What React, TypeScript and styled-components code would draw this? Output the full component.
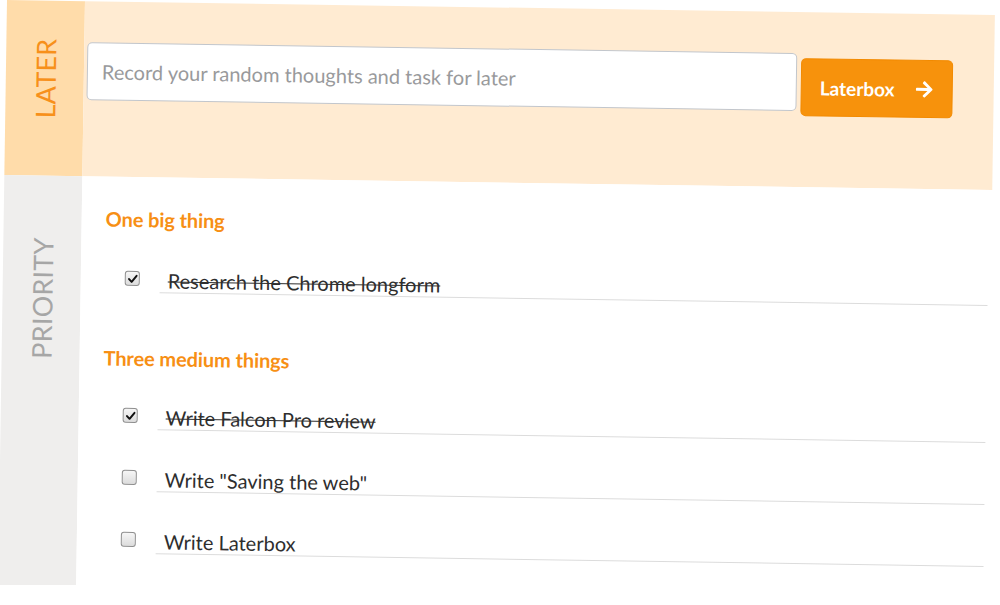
import React, { useState } from "react";
import styled, { createGlobalStyle } from "styled-components";
import { FaArrowRight } from "react-icons/fa";

interface TypesTask {
  id: number
  text: string
  done: boolean
}

interface TypesGroup {
  title: string
  tasks: TypesTask[]
}

const GlobalStyle = createGlobalStyle`
  html, body {
    margin: 0;
    padding: 0;
    background: #ffffff;
    overflow: hidden;
  }
  body {
    font-family: Lato, "Open Sans", "Liberation Sans", sans-serif;
  }
`

const Page = styled.div`
  width: 988px;
  margin-left: 7px;
  transform: rotate(0.87deg);
  transform-origin: 0 0;
`

const Section = styled.section`
  display: flex;
  align-items: stretch;
`

const SideLabel = styled.div<{ $bg: string, $top: number }>`
  width: 78px;
  flex-shrink: 0;
  background: ${p => p.$bg};
  display: flex;
  justify-content: center;
  padding-top: ${p => p.$top}px;
  box-sizing: border-box;
`

const SideText = styled.span<{ $color: string }>`
  writing-mode: vertical-rl;
  transform: rotate(180deg);
  font-family: Lato, "Liberation Sans", sans-serif;
  font-weight: 400;
  font-size: 27px;
  line-height: 1;
  letter-spacing: 0.2px;
  color: ${p => p.$color};
  height: fit-content;
`

const LaterBar = styled.div`
  flex: 1;
  height: 175px;
  background: #ffebd2;
  display: flex;
  align-items: flex-start;
  padding: 41px 0 0 3px;
  box-sizing: border-box;
  gap: 4px;
`

const RecordInput = styled.input`
  width: 710px;
  height: 58px;
  box-sizing: border-box;
  border: 1px solid #c2c6cc;
  border-radius: 5px;
  background: #ffffff;
  padding: 0 14px;
  font-family: Lato, "Liberation Sans", sans-serif;
  font-size: 20px;
  color: #333;
  outline: none;

  &::placeholder {
    color: #999a9c;
  }
`

const LaterButton = styled.button`
  margin-top: 5px;
  width: 152px;
  height: 58px;
  box-sizing: border-box;
  border: 1px solid #f28a00;
  border-radius: 5px;
  background: #f7920c;
  color: #ffffff;
  display: flex;
  align-items: center;
  padding: 0 0 0 18px;
  gap: 20px;
  font-family: Lato, "Liberation Sans", sans-serif;
  font-weight: 700;
  font-size: 19px;
  cursor: pointer;

  svg {
    font-size: 19px;
  }
`

const PriorityBody = styled.div`
  flex: 1;
  background: #ffffff;
  padding: 30px 0 33px 0;
  display: flex;
  flex-direction: column;
`

const Group = styled.div<{ $gap: number }>`
  display: flex;
  flex-direction: column;
  margin-top: ${p => p.$gap}px;
`

const Heading = styled.h3`
  margin: 0 0 0 24px;
  font-family: Lato, "Liberation Sans", sans-serif;
  font-weight: 700;
  font-size: 20px;
  line-height: 24px;
  color: #f78f14;
  letter-spacing: -0.1px;
`

const TaskList = styled.ul<{ $top: number }>`
  list-style: none;
  margin: ${p => p.$top}px 0 0 0;
  padding: 0;
  display: flex;
  flex-direction: column;
  gap: 37px;
`

const TaskRow = styled.li`
  display: flex;
  align-items: center;
  padding-left: 44px;
  margin-right: 3px;
`

const CheckBox = styled.button`
  width: 15px;
  height: 15px;
  flex-shrink: 0;
  margin: -4px 0 0 0;
  padding: 0;
  box-sizing: border-box;
  border: 1px solid #8e8e8e;
  border-radius: 3px;
  background: linear-gradient(#f6f6f6, #dcdcdc);
  display: flex;
  align-items: center;
  justify-content: center;
  cursor: pointer;
`

const TaskField = styled.div<{ $done: boolean }>`
  flex: 1;
  margin-left: 20px;
  padding-left: 8px;
  border-bottom: 1px solid #dcdcdc;
  font-family: Lato, "Liberation Sans", sans-serif;
  font-size: 20px;
  line-height: 24px;
  color: #2e2e2e;
  text-decoration: ${p => (p.$done ? 'line-through' : 'none')};
  text-decoration-thickness: 1px;
`

const initialGroups: TypesGroup[] = [
  {
    title: 'One big thing',
    tasks: [{ id: 1, text: 'Research the Chrome longform', done: true }],
  },
  {
    title: 'Three medium things',
    tasks: [
      { id: 2, text: 'Write Falcon Pro review', done: true },
      { id: 3, text: 'Write "Saving the web"', done: false },
      { id: 4, text: 'Write Laterbox', done: false },
    ],
  },
]

const Check = () => (
  <svg width="10" height="10" viewBox="0 0 10 10">
    <path d="M1.3 5.2 L3.9 7.9 L8.8 1.8" fill="none" stroke="#111" strokeWidth="2" strokeLinecap="round" strokeLinejoin="round" />
  </svg>
)

const App = () => {
  const [groups, setGroups] = useState(initialGroups)
  const [note, setNote] = useState('')

  const toggle = (id: number) => {
    setGroups(groups.map(g => ({
      ...g,
      tasks: g.tasks.map(t => (t.id === id ? { ...t, done: !t.done } : t)),
    })))
  }

  return (
    <>
      <GlobalStyle />
      <Page>
        <Section>
          <SideLabel $bg="#ffdcaa" $top={38}>
            <SideText $color="#f7901a">LATER</SideText>
          </SideLabel>
          <LaterBar>
            <RecordInput
              value={note}
              onChange={e => setNote(e.target.value)}
              placeholder="Record your random thoughts and task for later"
            />
            <LaterButton>
              Laterbox
              <FaArrowRight />
            </LaterButton>
          </LaterBar>
        </Section>

        <Section>
          <SideLabel $bg="#efeeed" $top={62}>
            <SideText $color="#a6a6a6">PRIORITY</SideText>
          </SideLabel>
          <PriorityBody>
            {groups.map((group, i) => (
              <Group key={group.title} $gap={i === 0 ? 0 : 53}>
                <Heading>{group.title}</Heading>
                <TaskList $top={i === 0 ? 37 : 35}>
                  {group.tasks.map(task => (
                    <TaskRow key={task.id}>
                      <CheckBox onClick={() => toggle(task.id)}>
                        {task.done && <Check />}
                      </CheckBox>
                      <TaskField $done={task.done}>{task.text}</TaskField>
                    </TaskRow>
                  ))}
                </TaskList>
              </Group>
            ))}
          </PriorityBody>
        </Section>
      </Page>
    </>
  )
}

export default App
